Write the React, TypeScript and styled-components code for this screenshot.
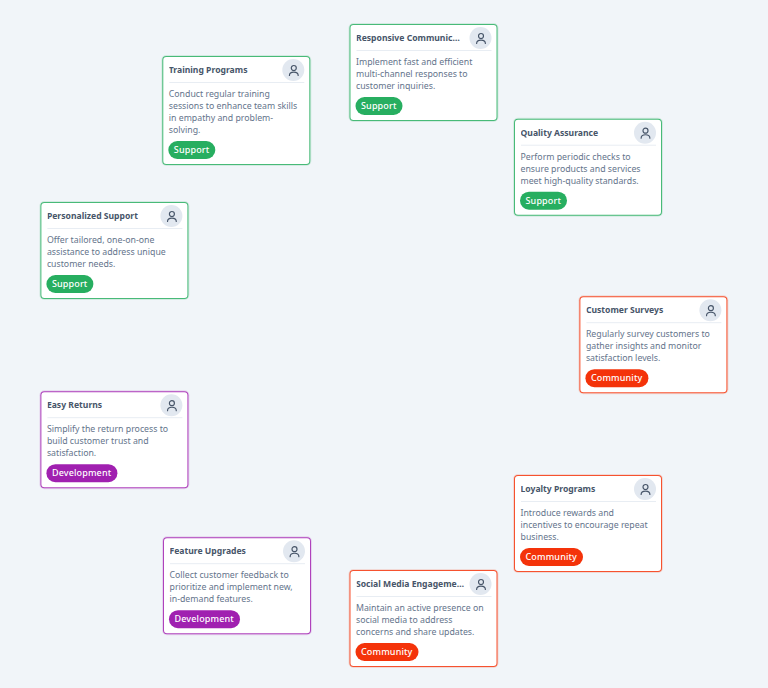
import React from "react";
import styled, { createGlobalStyle } from "styled-components";

const GlobalStyle = createGlobalStyle`
  html, body {
    margin: 0;
    padding: 0;
    background: #f1f5f9;
    font-family: "Noto Sans", sans-serif;
  }
`;

type Kind = "support" | "community" | "development";

const colors: Record<Kind, string> = {
  support: "#27ae60",
  community: "#f4330a",
  development: "#a020b0",
};

const labels: Record<Kind, string> = {
  support: "Support",
  community: "Community",
  development: "Development",
};

const nodes: {
  title: string;
  text: string;
  kind: Kind;
  x: number;
  y: number;
}[] = [
  {
    title: "Responsive Communication",
    text: "Implement fast and efficient multi-channel responses to customer inquiries.",
    kind: "support",
    x: 349.5,
    y: 24,
  },
  {
    title: "Training Programs",
    text: "Conduct regular training sessions to enhance team skills in empathy and problem-solving.",
    kind: "support",
    x: 162.3,
    y: 56,
  },
  {
    title: "Quality Assurance",
    text: "Perform periodic checks to ensure products and services meet high-quality standards.",
    kind: "support",
    x: 514,
    y: 118.7,
  },
  {
    title: "Personalized Support",
    text: "Offer tailored, one-on-one assistance to address unique customer needs.",
    kind: "support",
    x: 40.4,
    y: 202,
  },
  {
    title: "Customer Surveys",
    text: "Regularly survey customers to gather insights and monitor satisfaction levels.",
    kind: "community",
    x: 579.4,
    y: 296.2,
  },
  {
    title: "Easy Returns",
    text: "Simplify the return process to build customer trust and satisfaction.",
    kind: "development",
    x: 40.4,
    y: 391.2,
  },
  {
    title: "Loyalty Programs",
    text: "Introduce rewards and incentives to encourage repeat business.",
    kind: "community",
    x: 514,
    y: 475,
  },
  {
    title: "Feature Upgrades",
    text: "Collect customer feedback to prioritize and implement new, in-demand features.",
    kind: "development",
    x: 163,
    y: 537.2,
  },
  {
    title: "Social Media Engagement",
    text: "Maintain an active presence on social media to address concerns and share updates.",
    kind: "community",
    x: 349.5,
    y: 570,
  },
];

const Canvas = styled.div`
  position: relative;
  width: 768px;
  height: 688px;
  overflow: hidden;
  background: #f1f5f9;
`;

const Card = styled.div<{ $kind: Kind }>`
  position: absolute;
  left: 0;
  top: 0;
  width: 148px;
  box-sizing: border-box;
  padding: 2px 5px 5px 5.5px;
  background: #fff;
  border: 1px solid ${(p) => colors[p.$kind]}d8;
  box-shadow: 0 0 0 1px ${(p) => colors[p.$kind]}26;
  border-radius: 4px;
`;

const Head = styled.div`
  display: flex;
  align-items: center;
  justify-content: space-between;
  gap: 5px;
  padding-bottom: 1px;
  border-bottom: 1px solid #e8edf3;
`;

const Title = styled.div`
  flex: 1;
  min-width: 0;
  font-size: 8.6px;
  line-height: 14px;
  font-weight: 700;
  color: #475569;
  white-space: nowrap;
  overflow: hidden;
  text-overflow: ellipsis;
`;

const Avatar = styled.div`
  flex: none;
  width: 22px;
  height: 22px;
  border-radius: 50%;
  background: #e2e8f0;
  color: #475569;
  display: flex;
  align-items: center;
  justify-content: center;
`;

const Body = styled.p`
  margin: 5px 0;
  font-size: 8.75px;
  line-height: 12px;
  color: #64748b;
`;

const Tag = styled.div<{ $kind: Kind }>`
  width: fit-content;
  margin-left: -1px;
  padding: 0 6px;
  height: 18px;
  line-height: 18px;
  border-radius: 9px;
  font-size: 9px;
  font-weight: 500;
  letter-spacing: 0.15px;
  color: #fff;
  background: ${(p) => colors[p.$kind]};
`;

const PersonIcon = () => (
  <svg width="15" height="15" viewBox="0 0 24 24" fill="none" stroke="currentColor" strokeWidth="1.9" strokeLinecap="round">
    <circle cx="12" cy="8" r="4" />
    <path d="M5 20c0-3.600 3-5.500 7-5.500s7 1.900 7 5.500" />
  </svg>
);

export default function App() {
  return (
    <Canvas>
      <GlobalStyle />
      {nodes.map((n) => (
        <Card key={n.title} $kind={n.kind} style={{ transform: `translate(${n.x}px, ${n.y}px)` }}>
          <Head>
            <Title>{n.title}</Title>
            <Avatar>
              <PersonIcon />
            </Avatar>
          </Head>
          <Body>{n.text}</Body>
          <Tag $kind={n.kind}>{labels[n.kind]}</Tag>
        </Card>
      ))}
    </Canvas>
  );
}
